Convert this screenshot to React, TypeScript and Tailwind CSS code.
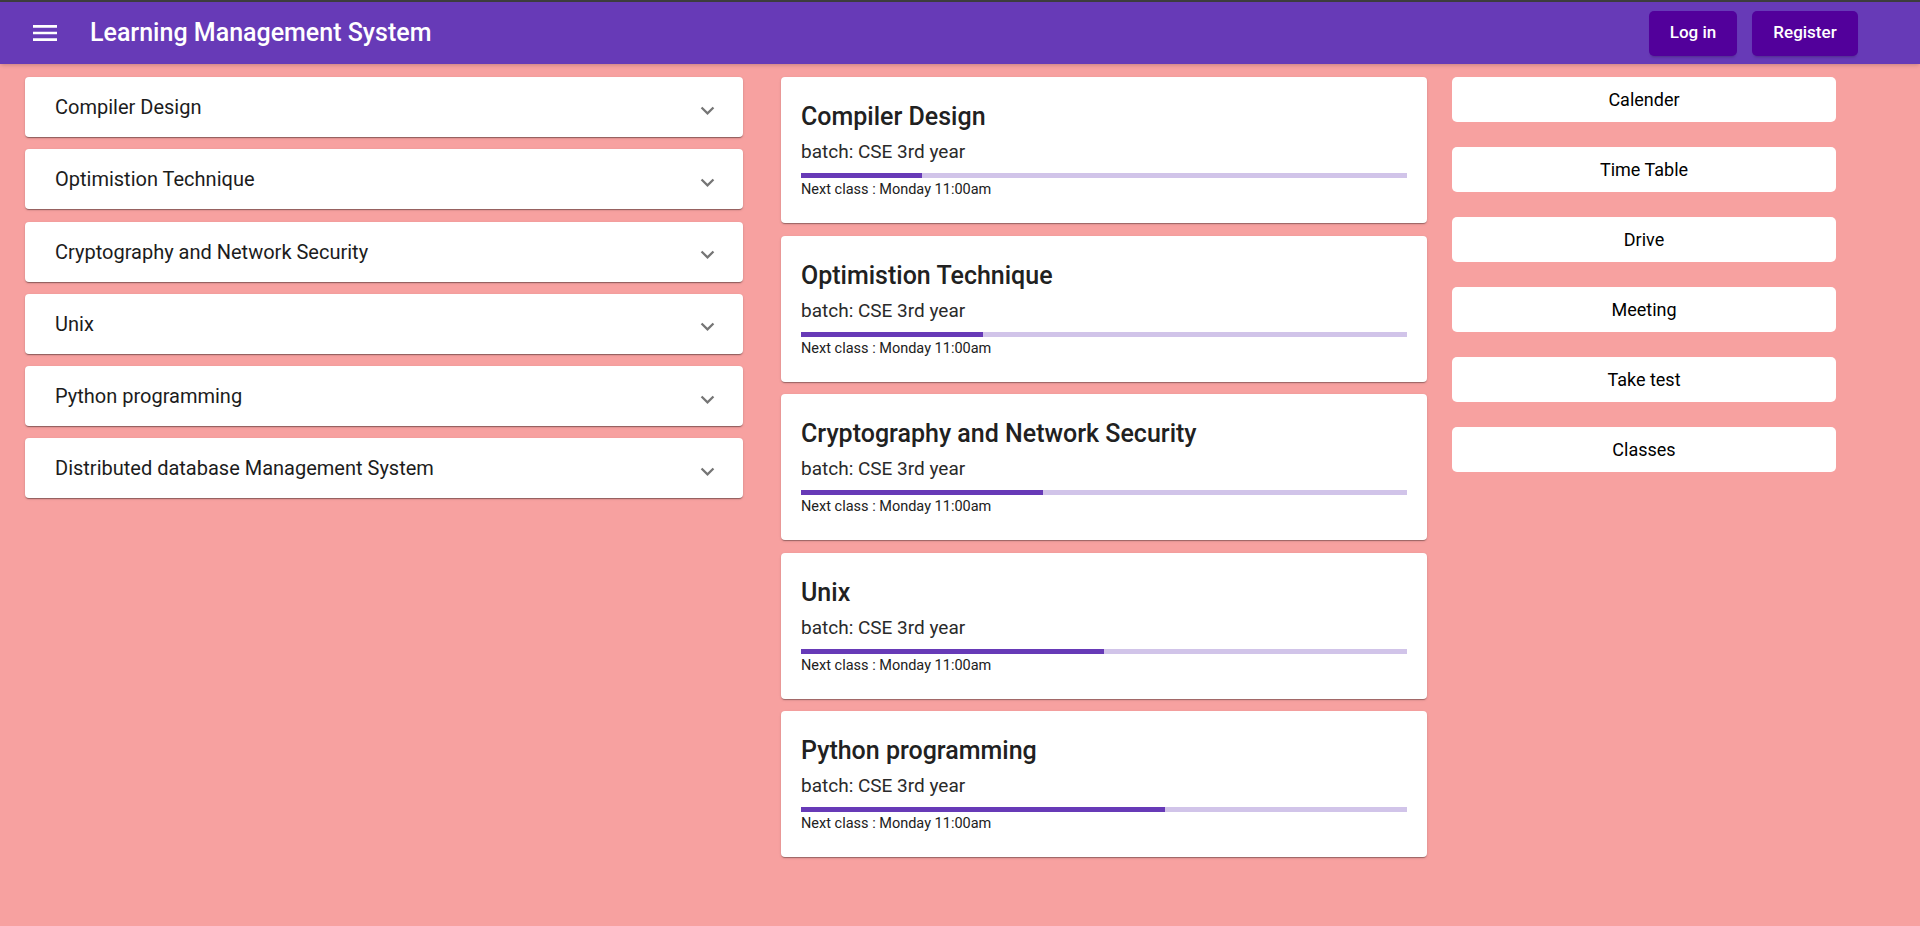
const courses = [
  'Compiler Design',
  'Optimistion Technique',
  'Cryptography and Network Security',
  'Unix',
  'Python programming',
  'Distributed database Management System',
]

// only the first five get a card in the middle column
const progress = [20, 30, 40, 50, 60]

const links = ['Calender', 'Time Table', 'Drive', 'Meeting', 'Take test', 'Classes']

function MenuIcon() {
  return (
    <svg width="32" height="32" viewBox="0 0 24 24" fill="currentColor">
      <path d="M3 18h18v-2H3v2zm0-5h18v-2H3v2zm0-7v2h18V6H3z" />
    </svg>
  )
}

function ExpandIcon() {
  return (
    <svg width="27" height="27" viewBox="0 0 24 24" fill="currentColor">
      <path d="M16.59 8.59 12 13.17 7.41 8.59 6 10l6 6 6-6z" />
    </svg>
  )
}

export default function App() {
  return (
    <div
      className="min-h-[926px] bg-[#f7a1a0]"
      style={{ fontFamily: 'Roboto, "Liberation Sans", sans-serif' }}
    >
      <div className="h-[2px] bg-[#3d3d3d]" />
      <header className="flex h-[62px] items-center bg-[#673ab7] pl-[29px] pr-[62px] text-white shadow-[0_2px_4px_-1px_rgba(0,0,0,0.2)]">
        <MenuIcon />
        <h1 className="ml-[29px] text-[25px] font-medium">
          Learning Management System
        </h1>
        <div className="ml-auto flex gap-[15px]">
          <button className="h-[45px] w-[88px] rounded-[5px] bg-[#52009b] text-[17px] font-medium text-white shadow-[0_3px_3px_-2px_rgba(0,0,0,0.25)]">
            Log in
          </button>
          <button className="h-[45px] w-[106px] rounded-[5px] bg-[#52009b] text-[17px] font-medium text-white shadow-[0_3px_3px_-2px_rgba(0,0,0,0.25)]">
            Register
          </button>
        </div>
      </header>

      <main className="flex items-start pl-[25px] pt-[13px]">
        {/* accordions */}
        <div className="flex w-[718px] flex-col gap-[12.3px]">
          {courses.map((c) => (
            <div
              key={c}
              className="flex h-[60px] items-center justify-between rounded-[4px] bg-white pl-[30px] pr-[22px] shadow-[0_2px_1px_-1px_rgba(0,0,0,0.25),0_1px_1px_0_rgba(0,0,0,0.16),0_1px_3px_0_rgba(0,0,0,0.12)]"
            >
              <span className="text-[20px] text-[#1c1c1c]">{c}</span>
              <span className="mt-[6px] text-[#757575]">
                <ExpandIcon />
              </span>
            </div>
          ))}
        </div>

        {/* course cards */}
        <div className="ml-[38px] flex w-[646px] flex-col gap-[12.5px]">
          {progress.map((p, i) => (
            <div
              key={courses[i]}
              className="rounded-[4px] bg-white px-[20px] pb-[23px] pt-[24px] shadow-[0_2px_1px_-1px_rgba(0,0,0,0.2),0_1px_1px_0_rgba(0,0,0,0.14),0_1px_3px_0_rgba(0,0,0,0.12)]"
            >
              <div className="text-[25px] font-medium leading-[32px] text-[#212121]">
                {courses[i]}
              </div>
              <div className="mt-[7px] text-[19px] leading-[24px] text-[#2a2a2a]">
                batch: CSE 3rd year
              </div>
              <div className="mt-[9px] h-[5px] w-full bg-[#d1c4e9]">
                <div className="h-full bg-[#673ab7]" style={{ width: `${p}%` }} />
              </div>
              <div className="mt-[2px] text-[14.5px] leading-[20px] text-[#212121]">
                Next class : Monday 11:00am
              </div>
            </div>
          ))}
        </div>

        {/* quick links */}
        <div className="ml-[25px] flex w-[384px] flex-col gap-[25px]">
          {links.map((l) => (
            <button
              key={l}
              className="h-[45px] rounded-[5px] bg-white text-[18px] text-black"
            >
              {l}
            </button>
          ))}
        </div>
      </main>
    </div>
  )
}
